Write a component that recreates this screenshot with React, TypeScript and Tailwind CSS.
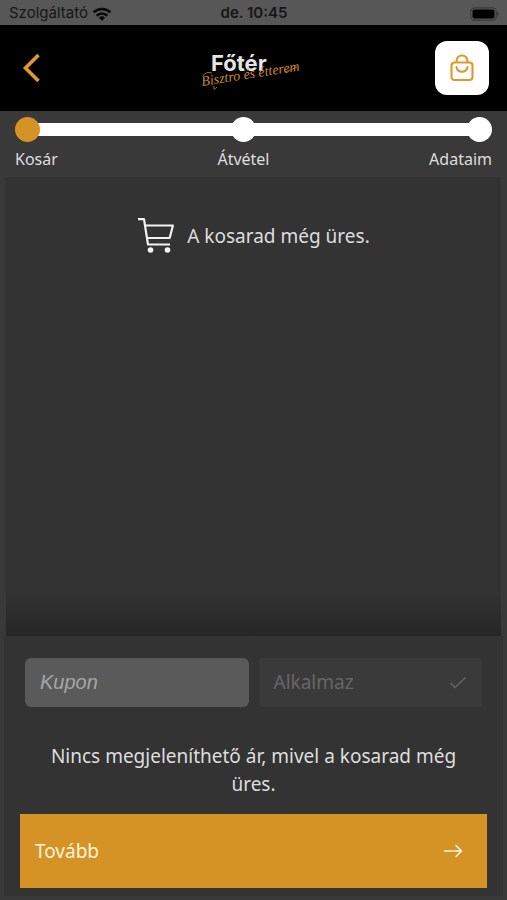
import { useState } from 'react'

const STEPS = [
  { id: 'cart', label: 'Kosár', align: 'items-start' },
  { id: 'pickup', label: 'Átvétel', align: 'items-center' },
  { id: 'details', label: 'Adataim', align: 'items-end' },
]

function StatusBar() {
  return (
    <div className="grid h-[25px] grid-cols-3 items-center bg-[#575757] pt-[2px] pr-2 pl-[9px] font-['Inter',sans-serif] text-[15px] text-[#161616]">
      <div className="flex items-center gap-1">
        <span>Szolgáltató</span>
        <svg width="20" height="14" viewBox="0 0 20 14" fill="none" stroke="#080808" strokeWidth="2.6">
          <path d="M1.6 5.4a12 12 0 0 1 16.8 0" />
          <path d="M4.7 8.7a7.6 7.6 0 0 1 10.6 0" />
          <path d="M10 13.8 6.9 10.7a4.5 4.5 0 0 1 6.2 0z" fill="#080808" stroke="none" />
        </svg>
      </div>
      <span className="text-center font-semibold">de. 10:45</span>
      <svg className="justify-self-end" width="29" height="14" viewBox="0 0 29 14">
        <rect x=".8" y=".8" width="25.4" height="12.4" rx="3.6" fill="none" stroke="#3a3a3a" strokeWidth="1.2" />
        <rect x="2.5" y="2.5" width="22" height="9" rx="2" fill="#000" />
        <path d="M27.2 4.8q1.6.7 1.6 2.2t-1.6 2.2z" fill="#3a3a3a" />
      </svg>
    </div>
  )
}

function Logo() {
  return (
    <svg width="110" height="52" viewBox="0 0 110 52" role="img" aria-label="Főtér Bisztró és étterem">
      <text x="18" y="29" fill="#e4e4e4" fontFamily="Inter, sans-serif" fontWeight="700" fontSize="22">
        Főtér
      </text>
      <text x="9" y="44" transform="rotate(-9 9 44)" fill="#c98a22" fontFamily="'Liberation Serif', serif" fontStyle="italic" fontSize="14">
        Bisztro és étterem
      </text>
      <path d="M10 34q3-5 9-3M24 45q-4 5-3-1M92 30q6-2 12-5" fill="none" stroke="#c98a22" strokeWidth=".8" />
    </svg>
  )
}

function Header() {
  return (
    <header className="flex h-[86px] items-center justify-between bg-black pr-[18px] pl-5">
      <button aria-label="Vissza" className="flex w-10 items-center">
        <svg width="24" height="32" viewBox="0 0 24 32" fill="none" stroke="#dd9a2b" strokeWidth="3.6">
          <path d="M18.5 3 5.5 16l13 13" />
        </svg>
      </button>
      <Logo />
      <button aria-label="Kosár" className="flex size-[54px] items-center justify-center rounded-xl bg-white">
        <svg width="24" height="28" viewBox="0 0 24 28" fill="none" stroke="#dd9a2b" strokeWidth="2.1" strokeLinecap="round">
          <rect x="1.5" y="8.5" width="21" height="17.5" rx="3" />
          <path d="M6.5 8V7a5.5 5.5 0 0 1 11 0v1M6.5 13a5.6 5.8 0 0 0 11 0" />
        </svg>
      </button>
    </header>
  )
}

function Steps() {
  return (
    <nav aria-label="Rendelés lépései" className="relative px-[15px] pt-[6px]">
      <div className="absolute inset-x-7 top-3 h-[13px] bg-white" />
      <ol className="relative flex justify-between">
        {STEPS.map(({ id, label, align }, i) => (
          <li key={id} className={`flex flex-col gap-[5px] ${align}`}>
            <span className={`size-[25px] rounded-full ${i === 0 ? 'bg-[#d49324]' : 'bg-white'}`} />
            <span className="h-[30px] text-base leading-6">{label}</span>
          </li>
        ))}
      </ol>
    </nav>
  )
}

export default function App() {
  const [coupon, setCoupon] = useState('')

  return (
    <div className="flex min-h-screen flex-col bg-[#393939] font-['Noto_Sans',sans-serif] text-[#dedede]">
      <StatusBar />
      <Header />
      <Steps />

      {/* Cart contents */}
      <main className="mx-[6px] flex-1 bg-[#333333] bg-linear-to-t from-[#262626] to-[#333333] to-10% pt-10">
        <div className="flex items-center justify-center gap-3">
          <svg width="38" height="38" viewBox="0 0 38 38" fill="none" stroke="#f2f2f2" strokeWidth="2.2">
            <path d="M1 2.2h6L11 27.5h22M7.900 8.500h28l-3.200 12.500H9.900" strokeLinejoin="round" />
            <circle cx="13.5" cy="33" r="2.8" fill="#f2f2f2" stroke="none" />
            <circle cx="30.5" cy="33" r="2.8" fill="#f2f2f2" stroke="none" />
          </svg>
          <p className="text-[19px]">A kosarad még üres.</p>
        </div>
      </main>

      {/* Coupon and checkout */}
      <footer className="mx-1 mb-1 bg-[#333333] px-4 pt-[22px] pb-2">
        <div className="flex gap-[10px] px-[5px]">
          <input
            value={coupon}
            onChange={e => setCoupon(e.target.value)}
            placeholder="Kupon"
            aria-label="Kupon"
            className="h-[49px] min-w-0 flex-1 rounded-md bg-[#5a5a5a] px-[15px] font-['Liberation_Sans',sans-serif] text-xl italic outline-none placeholder:text-[#a6a6a6]"
          />
          <button
            disabled={!coupon}
            className="flex h-[49px] min-w-0 flex-1 items-center justify-between rounded-sm bg-[#3a3a3a] px-[15px] text-[19px] text-[#666666]"
          >
            Alkalmaz
            <svg width="18" height="14" viewBox="0 0 18 14" fill="none" stroke="currentColor" strokeWidth="1.5">
              <path d="m1.5 7 4.5 4.5L16.5 1.5" />
            </svg>
          </button>
        </div>
        <p className="px-6 pt-[35px] pb-4 text-center text-[19px] leading-7">
          Nincs megjeleníthető ár, mivel a kosarad még üres.
        </p>
        <button className="flex h-[74px] w-full items-center justify-between bg-[#d49324] pr-6 pl-[15px] text-[19px] text-[#fff5dc]">
          Tovább
          <svg width="20" height="14" viewBox="0 0 20 14" fill="none" stroke="currentColor" strokeWidth="1.6" strokeLinecap="round" strokeLinejoin="round">
            <path d="M1.5 7h17M13 1.5 18.5 7 13 12.5" />
          </svg>
        </button>
      </footer>
    </div>
  )
}
